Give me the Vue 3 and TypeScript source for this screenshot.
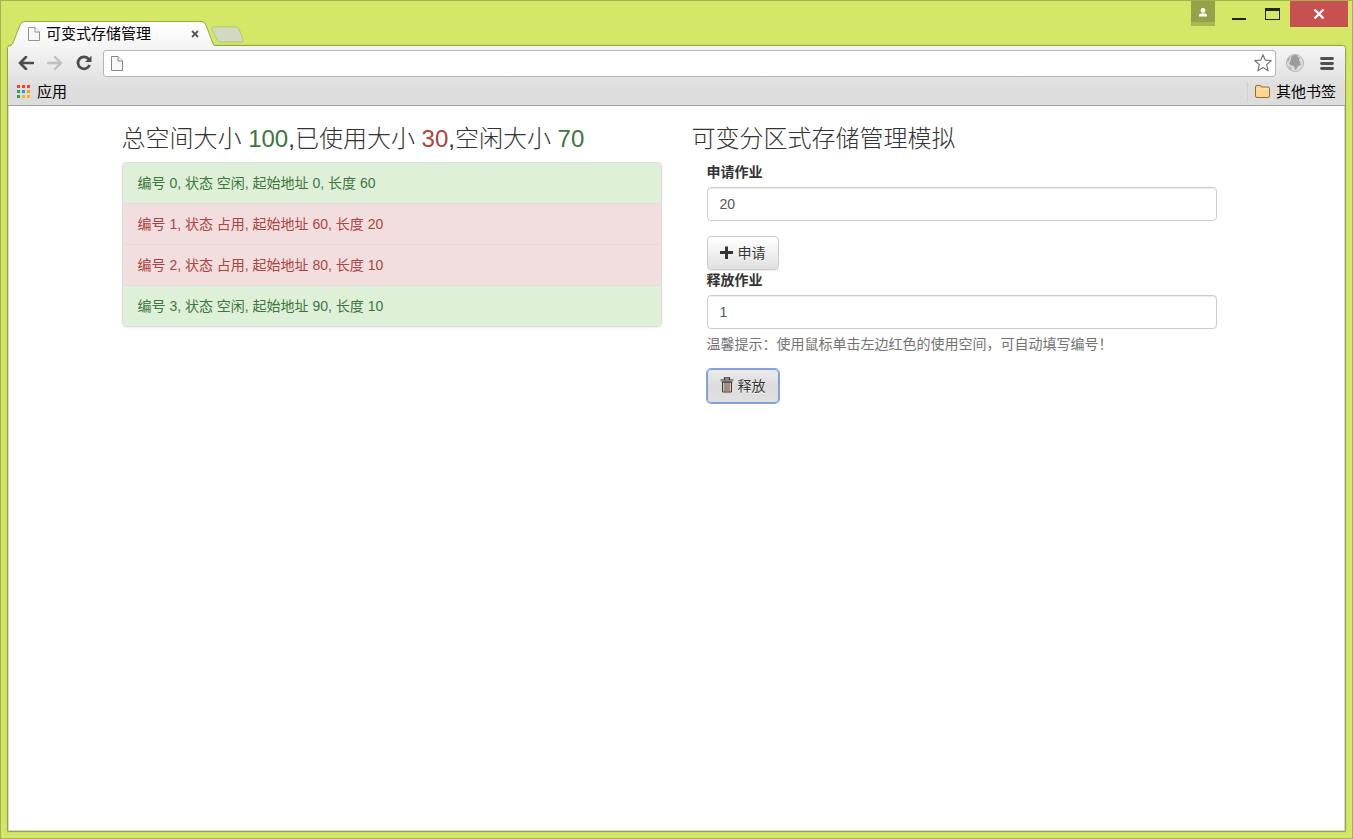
<script setup lang="ts">
import { computed, ref } from 'vue'

interface Block {
  start: number
  size: number
  used: boolean
}

const blocks = ref<Block[]>([
  { start: 0, size: 60, used: false },
  { start: 60, size: 20, used: true },
  { start: 80, size: 10, used: true },
  { start: 90, size: 10, used: false },
])

const requestSize = ref('20')
const releaseId = ref('1')

const total = computed(() => blocks.value.reduce((sum, b) => sum + b.size, 0))
const used = computed(() => blocks.value.filter((b) => b.used).reduce((sum, b) => sum + b.size, 0))

const appColors = ['#f44336', '#f44336', '#f44336', '#2f9e5b', '#2196f3', '#ffa000', '#2f9e5b', '#ffb300', '#ffb300']

function pick(index: number) {
  if (blocks.value[index].used) releaseId.value = String(index)
}

function allocate() {
  const size = Number(requestSize.value)
  const index = blocks.value.findIndex((b) => !b.used && b.size >= size)
  if (!(size > 0) || index < 0) return
  const free = blocks.value[index]
  const parts: Block[] = [{ start: free.start, size, used: true }]
  if (free.size > size) parts.push({ start: free.start + size, size: free.size - size, used: false })
  blocks.value.splice(index, 1, ...parts)
}

function release() {
  const block = blocks.value[Number(releaseId.value)]
  if (!block) return
  block.used = false
  blocks.value = blocks.value.reduce<Block[]>((merged, b) => {
    const last = merged[merged.length - 1]
    if (last && !last.used && !b.used) last.size += b.size
    else merged.push({ ...b })
    return merged
  }, [])
}
</script>

<template>
  <div class="window">
    <header class="titlebar">
      <div class="tab">
        <svg class="tab-shape" width="208" height="26" viewBox="0 0 208 26" aria-hidden="true">
          <defs>
            <linearGradient id="tabFill" x1="0" y1="0" x2="0" y2="1">
              <stop offset="0" stop-color="#ffffff" />
              <stop offset="1" stop-color="#f5f5f5" />
            </linearGradient>
          </defs>
          <path d="M1 26C4 25 5 24 6 22L13 4Q14.500 .5 18 .5H194Q197.500 .5 199 4L205 20Q207 25.500 208 26Z" fill="url(#tabFill)" />
          <path d="M1 25C4 24.500 5 24 6 22L13 4Q14.500 .5 18 .5H194Q197.500 .5 199 4L205 20Q206.500 24.500 208 25" fill="none" stroke="#98a34c" />
        </svg>
        <svg class="page-icon" width="12" height="14" viewBox="0 0 12 14" aria-hidden="true">
          <path d="M.5 .5H7L11.500 5V13.500H.5Z" fill="#f8f8f8" stroke="#929292" />
          <path d="M7 .5V5H11.500" fill="#fff" stroke="#929292" />
        </svg>
        <span class="tab-title">可变式存储管理</span>
        <button class="tab-close" aria-label="关闭标签页">
          <svg width="8" height="8" viewBox="0 0 8 8"><path d="M1 1L7 7M7 1L1 7" stroke="#555" stroke-width="1.800" /></svg>
        </button>
      </div>
      <button class="new-tab" aria-label="新标签页">
        <svg width="33" height="17" viewBox="0 0 33 17">
          <path d="M4 .8H25Q27 .8 28 3L32 13Q33 16 30 16H10Q7 16 6 14L1.500 4Q.5 .8 4 .8Z" fill="#d1dac0" stroke="#b9c66a" />
        </svg>
      </button>
      <div class="controls">
        <button class="user" aria-label="用户">
          <svg width="10" height="9" viewBox="0 0 10 9"><circle cx="5" cy="2.400" r="2.400" fill="#fff" /><path d="M1 8.500V7.500Q1 5.300 5 5.300T9 7.500V8.500Z" fill="#fff" /></svg>
        </button>
        <button class="minimize" aria-label="最小化">
          <svg width="14" height="12" viewBox="0 0 14 12"><path d="M0 10H14V12H0Z" fill="#222" /></svg>
        </button>
        <button class="maximize" aria-label="最大化">
          <svg width="15" height="12" viewBox="0 0 15 12"><path d="M0 0H15V12H0ZM1 3V11H14V3Z" fill="#222" fill-rule="evenodd" /></svg>
        </button>
        <button class="close" aria-label="关闭">
          <svg width="12" height="10" viewBox="0 0 12 10"><path d="M1.500 .5L10.500 9.500M10.500 .5L1.500 9.500" stroke="#fff" stroke-width="2.200" /></svg>
        </button>
      </div>
    </header>

    <div class="frame">
      <div class="chrome">
        <nav class="toolbar">
          <button class="tool" aria-label="后退">
            <svg width="16" height="14" viewBox="0 0 16 14"><path d="M8 1L2 7L8 13M2.500 7H15" fill="none" stroke="#4d4d4d" stroke-width="2.600" stroke-linecap="round" /></svg>
          </button>
          <button class="tool" aria-label="前进">
            <svg width="16" height="14" viewBox="0 0 16 14"><path d="M8 1L14 7L8 13M13.500 7H1" fill="none" stroke="#c0c0c0" stroke-width="2.400" stroke-linecap="round" /></svg>
          </button>
          <button class="tool" aria-label="重新加载">
            <svg width="16" height="16" viewBox="0 0 16 16"><path d="M12.800 4.200A6 6 0 1 0 13.600 10" fill="none" stroke="#4d4d4d" stroke-width="2.800" /><path d="M15.500 .8V7H9Z" fill="#4d4d4d" /></svg>
          </button>
          <div class="omnibox">
            <svg width="12" height="15" viewBox="0 0 12 15" aria-hidden="true">
              <path d="M.5 .5H7L11.500 5V14.500H.5Z" fill="#f8f8f8" stroke="#858585" />
              <path d="M7 .5V5H11.500" fill="#fff" stroke="#858585" />
            </svg>
            <input type="text" aria-label="地址栏" />
            <button class="star" aria-label="收藏">
              <svg width="18" height="18" viewBox="0 0 18 18"><path d="M9 .8L11.300 6.200L17.200 6.700L12.700 10.600L14.100 16.800L9 13.500L3.900 16.800L5.300 10.600L.8 6.700L6.700 6.200Z" fill="#fff" stroke="#777" stroke-width="1.200" stroke-linejoin="round" /></svg>
            </button>
          </div>
          <button class="tool" aria-label="扩展程序">
            <svg width="20" height="20" viewBox="0 0 20 20">
              <circle cx="10" cy="10" r="8.500" fill="#dcdcdc" stroke="#b4b4b4" />
              <path d="M6 4Q8 1.500 12 2L13 4L15 5Q13 7 15 9L16 12L13 13Q12 16 10 17L9 13Q5 13 4 10Q6 9 6 4Z" fill="#9c9c9c" />
              <path d="M2 8Q2 5 4 4L5 6L3 9ZM3 13L6 14L7 17Q4 16 3 13Z" fill="#b0b0b0" />
            </svg>
          </button>
          <button class="tool menu" aria-label="菜单">
            <svg width="14" height="13" viewBox="0 0 14 13"><path d="M1.500 1.500H12.500M1.500 6.500H12.500M1.500 11.500H12.500" stroke="#505050" stroke-width="2.800" stroke-linecap="round" /></svg>
          </button>
        </nav>
        <nav class="bookmarks">
          <a href="#" class="bookmark">
            <svg width="13" height="13" viewBox="0 0 13 13" aria-hidden="true">
              <rect v-for="(color, i) in appColors" :key="i" :x="(i % 3) * 5" :y="Math.floor(i / 3) * 5" width="3" height="3" :fill="color" />
            </svg>
            <span>应用</span>
          </a>
          <a href="#" class="bookmark others">
            <svg width="15" height="13" viewBox="0 0 15 13" aria-hidden="true">
              <path d="M.5 11V2Q.5 .5 2 .5H5Q6.500 .5 6.500 2H13Q14.500 2 14.500 3.500V11Q14.500 12.500 13 12.500H2Q.5 12.500 .5 11Z" fill="#fdd68b" stroke="#96683a" />
              <path d="M1.500 4H13.500" stroke="#ffeec0" />
            </svg>
            <span>其他书签</span>
          </a>
        </nav>
      </div>

      <div class="page">
        <main class="container">
          <section class="column">
            <h3>
              总空间大小 <span class="free-text">{{ total }}</span>,已使用大小 <span class="used-text">{{ used }}</span>,空闲大小 <span class="free-text">{{ total - used }}</span>
            </h3>
            <ul class="blocks">
              <li v-for="(block, i) in blocks" :key="i" :class="block.used ? 'used' : 'free'" @click="pick(i)">
                编号 {{ i }}, 状态 {{ block.used ? '占用' : '空闲' }}, 起始地址 {{ block.start }}, 长度 {{ block.size }}
              </li>
            </ul>
          </section>
          <section class="column">
            <h3>可变分区式存储管理模拟</h3>
            <form class="form" @submit.prevent="allocate">
              <label for="request">申请作业</label>
              <input id="request" v-model="requestSize" class="field" type="text" />
              <button class="btn" type="submit">
                <svg width="14" height="14" viewBox="0 0 14 14" aria-hidden="true"><path d="M5 .5H8V5H13V8H8V13H5V8H0V5H5Z" fill="#333" /></svg>
                <span>申请</span>
              </button>
            </form>
            <form class="form" @submit.prevent="release">
              <label for="release">释放作业</label>
              <input id="release" v-model="releaseId" class="field" type="text" aria-describedby="tip" />
              <p id="tip" class="help">温馨提示：使用鼠标单击左边红色的使用空间，可自动填写编号！</p>
              <button class="btn active" type="submit">
                <svg width="14" height="18" viewBox="0 0 14 18" aria-hidden="true">
                  <path d="M4.500 2.500V.8H9.500V2.500M.5 3H13.500" fill="none" stroke="#333" stroke-width="1.200" />
                  <path d="M2.500 5V15H11.500V5Z" fill="#d8c8a8" stroke="#443a40" />
                  <path d="M5 5V14.500M7 5V14.500M9 5V14.500" stroke="#6a5560" />
                  <path d="M1.500 5H12.500" stroke="#443a40" />
                </svg>
                <span>释放</span>
              </button>
            </form>
          </section>
        </main>
      </div>
    </div>
  </div>
</template>

<style>
body {
  margin: 0;
}
</style>

<style scoped>
* {
  box-sizing: border-box;
}

button {
  padding: 0;
  border: 0;
  background: none;
  font: inherit;
  color: inherit;
}

svg {
  display: block;
  flex: none;
}

.window {
  display: flex;
  flex-direction: column;
  min-height: 100vh;
  padding: 0 6px 6px;
  border: 1px solid #a6b24f;
  background: #d4e766;
  font-family: "Liberation Sans", "Noto Sans CJK SC", sans-serif;
  font-size: 14px;
  line-height: 20px;
  color: #333;
}

.titlebar {
  display: flex;
  align-items: flex-end;
  height: 44px;
}

.tab {
  position: relative;
  z-index: 1;
  display: flex;
  align-items: center;
  width: 208px;
  height: 24px;
  padding: 2px 16px 0 21px;
}

.tab-shape {
  position: absolute;
  top: 0;
  left: 0;
}

.page-icon,
.tab-title,
.tab-close {
  position: relative;
}

.tab-title {
  flex: 1;
  margin-left: 6px;
  font-size: 15px;
  color: #000;
}

.new-tab {
  margin: 0 0 2px -4px;
}

.controls {
  display: flex;
  align-items: flex-start;
  align-self: flex-start;
  margin-left: auto;
  margin-right: -2px;
}

.user {
  display: flex;
  justify-content: center;
  width: 24px;
  height: 25px;
  padding-top: 7px;
  border-bottom: 4px solid #a8b552;
  background: #96a248;
}

.minimize,
.maximize {
  padding-top: 7px;
}

.minimize {
  margin-left: 17px;
}

.maximize {
  margin-left: 19px;
}

.close {
  display: flex;
  align-items: center;
  justify-content: center;
  width: 58px;
  height: 26px;
  margin-left: 10px;
  background: #c75050;
}

.frame {
  display: flex;
  flex: 1;
  flex-direction: column;
  border: 1px solid #98a34c;
  border-radius: 4px 4px 1px 1px;
  background: #fff;
  box-shadow: 0 0 2px #b2c055;
}

.chrome {
  border-bottom: 1px solid #a5a5a5;
  border-radius: 3px 3px 0 0;
  background: linear-gradient(#f5f5f5, #dedede 70%, #dcdcdc);
}

.toolbar {
  display: flex;
  align-items: center;
  gap: 9px;
  height: 34px;
  padding: 0 8px;
}

.tool {
  display: flex;
  align-items: center;
  justify-content: center;
  width: 20px;
  height: 20px;
}

.menu {
  margin-left: 3px;
}

.omnibox {
  display: flex;
  flex: 1;
  align-items: center;
  height: 27px;
  padding: 0 3px 0 7px;
  border: 1px solid #b4b4b4;
  border-radius: 3px;
  background: #fff;
}

.omnibox input {
  flex: 1;
  min-width: 0;
  padding: 0 8px;
  border: 0;
  outline: 0;
  font: inherit;
}

.bookmarks {
  display: flex;
  align-items: center;
  justify-content: space-between;
  height: 25px;
  padding: 0 9px 2px;
}

.bookmark {
  display: flex;
  align-items: center;
  gap: 7px;
  font-size: 15px;
  color: #000;
  text-decoration: none;
}

.others {
  gap: 6px;
  padding-left: 7px;
  border-left: 1px solid #cdd1d6;
}

.page {
  flex: 1;
  border: 1px solid #d6d6d6;
  border-top: 0;
}

.container {
  display: flex;
  width: 100%;
  max-width: 1140px;
  margin: 0 auto;
}

.column {
  flex: 1;
  min-width: 0;
  padding: 0 15px;
}

h3 {
  margin: 20px 0 10px;
  font-size: 24px;
  font-weight: 300;
  line-height: 26px;
}

.free-text {
  color: #3c763d;
}

.used-text {
  color: #a94442;
}

.blocks {
  margin: 0;
  padding: 0;
  overflow: hidden;
  border: 1px solid #ddd;
  border-radius: 4px;
  box-shadow: 0 1px 2px rgba(0, 0, 0, 0.08);
  list-style: none;
}

.blocks li {
  padding: 10px 15px;
}

.blocks li + li {
  border-top: 1px solid #ddd;
}

.free {
  background: #dff0d8;
  color: #3c763d;
}

.used {
  background: #f2dede;
  color: #a94442;
  cursor: pointer;
}

.form {
  padding: 0 15px;
}

label {
  display: block;
  margin-bottom: 5px;
  font-weight: 700;
}

.field {
  display: block;
  width: 100%;
  height: 34px;
  margin-bottom: 15px;
  padding: 6px 12px;
  border: 1px solid #ccc;
  border-radius: 4px;
  outline: 0;
  box-shadow: inset 0 1px 1px rgba(0, 0, 0, 0.075);
  font: inherit;
  color: #555;
}

.help {
  margin: -10px 0 15px;
  color: #737373;
}

.btn {
  display: flex;
  align-items: center;
  gap: 4px;
  height: 34px;
  padding: 0 12px;
  border: 1px solid #ccc;
  border-radius: 4px;
  background: linear-gradient(#fff, #e0e0e0);
  box-shadow: 0 1px 1px rgba(0, 0, 0, 0.075);
  text-shadow: 0 1px 0 #fff;
}

.btn.active {
  border-color: #8a9cc0;
  background: linear-gradient(#ebebeb, #dcdcdc 50%, #e0e0e0);
  box-shadow: 0 0 0 1px #7ba7ee;
}
</style>
